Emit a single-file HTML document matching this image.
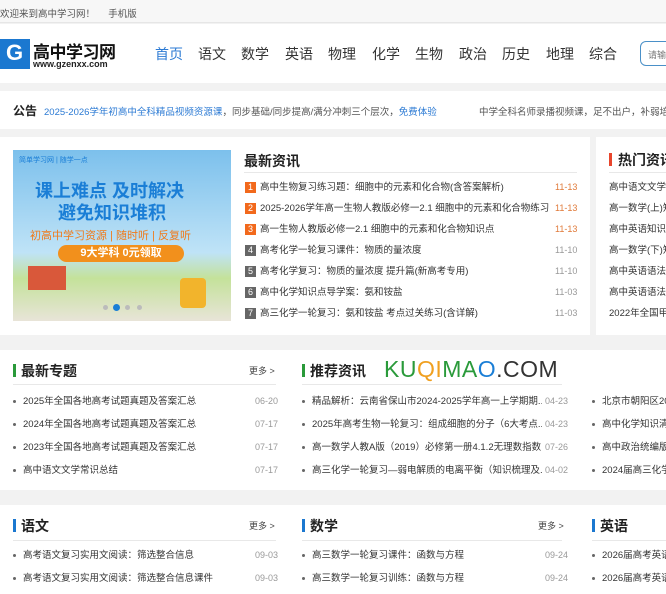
<!DOCTYPE html>
<html><head><meta charset="utf-8"><style>
*{margin:0;padding:0;box-sizing:border-box}
body{width:666px;height:594px;overflow:hidden;background:#f2f2f2;font-family:"Liberation Sans","Noto Sans CJK SC",sans-serif;color:#333;position:relative}
.a{position:absolute;white-space:nowrap}
.w{position:absolute;background:#fff}
.nav{font-size:14px;color:#333;top:44px}
.li{font-size:9.5px;color:#333;line-height:13px;overflow:hidden}
.d{font-size:9px;color:#999;line-height:13px}
.dot{display:inline-block;width:3px;height:3px;background:#666;border-radius:50%;margin-right:7px;vertical-align:middle}
.bd{display:inline-block;width:11px;height:11px;color:#fff;font-size:9px;text-align:center;line-height:11px;margin-right:4px;vertical-align:middle}
.t{font-size:14px;font-weight:bold;color:#222}
.bar{position:absolute;width:3px;height:13px}
.hr{position:absolute;height:1px;background:#e8e8e8}
</style></head><body>
<div class="w" style="left:0;top:0;width:666px;height:23px;background:#f7f7f7;border-bottom:1px solid #e6e6e6"></div>
<div class="a" style="left:0;top:6px;font-size:9.5px;color:#555">欢迎来到高中学习网！&nbsp;&nbsp;&nbsp;&nbsp;&nbsp;手机版</div>
<div class="w" style="left:0;top:24px;width:666px;height:59px"></div>
<div class="w" style="left:0;top:39px;width:30px;height:30px;background:#1b78d0"></div>
<div class="a" style="left:6px;top:40px;font-size:22px;font-weight:bold;color:#fff">G</div>
<div class="a" style="left:33px;top:38px;font-size:17px;font-weight:bold;color:#111;letter-spacing:-0.5px">高中学习网</div>
<div class="a" style="left:33px;top:59px;font-size:9px;font-weight:bold;color:#222">www.gzenxx.com</div>
<div class="a nav" style="left:155px;color:#2d7bd4">首页</div>
<div class="a nav" style="left:198px">语文</div>
<div class="a nav" style="left:241px">数学</div>
<div class="a nav" style="left:285px">英语</div>
<div class="a nav" style="left:328px">物理</div>
<div class="a nav" style="left:372px">化学</div>
<div class="a nav" style="left:415px">生物</div>
<div class="a nav" style="left:459px">政治</div>
<div class="a nav" style="left:502px">历史</div>
<div class="a nav" style="left:546px">地理</div>
<div class="a nav" style="left:589px">综合</div>
<div class="a" style="left:640px;top:41px;width:40px;height:25px;border:1px solid #4a90c8;border-radius:6px;font-size:9px;color:#777;padding:6px 0 0 7px">请输</div>
<div class="w" style="left:0;top:91px;width:666px;height:38px"></div>
<div class="a" style="left:13px;top:102px;font-size:12px;font-weight:bold;color:#222">公告</div>
<div class="a" style="left:44px;top:104px;font-size:9.5px;color:#555"><span style="color:#2d7bd4">2025-2026学年初高中全科精品视频资源课</span>，同步基础/同步提高/满分冲刺三个层次，<span style="color:#2d7bd4">免费体验</span></div>
<div class="a" style="left:479px;top:104px;font-size:9.5px;color:#555">中学全科名师录播视频课，足不出户，补弱培优</div>
<div class="w" style="left:0;top:137px;width:590px;height:198px"></div>
<div class="w" style="left:596px;top:137px;width:70px;height:198px"></div>
<div class="a" style="left:13px;top:150px;width:218px;height:171px;background:linear-gradient(#7cc0ec,#bfe3f7 60%,#c4e29a 75%,#e8e4d8)"></div>
<div class="a" style="left:35px;top:177px;font-size:18px;font-weight:bold;color:#1a7ed6">课上难点 及时解决</div>
<div class="a" style="left:58px;top:199px;font-size:18px;font-weight:bold;color:#1a7ed6">避免知识堆积</div>
<div class="a" style="left:30px;top:227px;font-size:11px;color:#f07a1a">初高中学习资源 | 随时听 | 反复听</div>
<div class="a" style="left:58px;top:245px;width:126px;height:17px;border-radius:9px;background:#f2901c;color:#fff;font-size:11px;font-weight:bold;text-align:center;line-height:17px">9大学科 0元领取</div>
<div class="a" style="left:19px;top:155px;font-size:7px;color:#1a7ed6">简单学习网 | 随学一点</div>
<div class="a" style="left:28px;top:266px;width:38px;height:24px;background:#d9583a"></div>
<div class="a" style="left:103px;top:305px;width:5px;height:5px;border-radius:50%;background:#bbb"></div>
<div class="a" style="left:113px;top:304px;width:7px;height:7px;border-radius:50%;background:#1a7ed6"></div>
<div class="a" style="left:125px;top:305px;width:5px;height:5px;border-radius:50%;background:#bbb"></div>
<div class="a" style="left:137px;top:305px;width:5px;height:5px;border-radius:50%;background:#bbb"></div>
<div class="a" style="left:180px;top:278px;width:26px;height:30px;background:#f2b42c;border-radius:4px"></div>
<div class="a t" style="left:244px;top:151px">最新资讯</div>
<div class="hr" style="left:244px;top:172px;width:333px"></div>
<div class="a li" style="left:245px;top:181px;width:305px"><span class="bd" style="background:#f2691c">1</span>高中生物复习练习题：细胞中的元素和化合物(含答案解析)</div>
<div class="a li" style="left:245px;top:202px;width:305px"><span class="bd" style="background:#f2691c">2</span>2025-2026学年高一生物人教版必修一2.1 细胞中的元素和化合物练习</div>
<div class="a li" style="left:245px;top:223px;width:305px"><span class="bd" style="background:#f2691c">3</span>高一生物人教版必修一2.1 细胞中的元素和化合物知识点</div>
<div class="a li" style="left:245px;top:244px"><span class="bd" style="background:#666">4</span>高考化学一轮复习课件：物质的量浓度</div>
<div class="a li" style="left:245px;top:265px"><span class="bd" style="background:#666">5</span>高考化学复习：物质的量浓度 提升篇(新高考专用)</div>
<div class="a li" style="left:245px;top:286px"><span class="bd" style="background:#666">6</span>高中化学知识点导学案：氨和铵盐</div>
<div class="a li" style="left:245px;top:307px"><span class="bd" style="background:#666">7</span>高三化学一轮复习：氨和铵盐 考点过关练习(含详解)</div>
<div class="a d" style="left:555px;top:181px;color:#e07a3a">11-13</div>
<div class="a d" style="left:555px;top:202px;color:#e07a3a">11-13</div>
<div class="a d" style="left:555px;top:223px;color:#e07a3a">11-13</div>
<div class="a d" style="left:555px;top:244px">11-10</div>
<div class="a d" style="left:555px;top:265px">11-10</div>
<div class="a d" style="left:555px;top:286px">11-03</div>
<div class="a d" style="left:555px;top:307px">11-03</div>
<div class="bar" style="left:609px;top:153px;background:#e8452c"></div>
<div class="a t" style="left:618px;top:150px">热门资讯</div>
<div class="hr" style="left:609px;top:172px;width:60px"></div>
<div class="a li" style="left:609px;top:181px">高中语文文学常识</div>
<div class="a li" style="left:609px;top:202px">高一数学(上)知识</div>
<div class="a li" style="left:609px;top:223px">高中英语知识点</div>
<div class="a li" style="left:609px;top:244px">高一数学(下)知识</div>
<div class="a li" style="left:609px;top:265px">高中英语语法知识</div>
<div class="a li" style="left:609px;top:286px">高中英语语法总结</div>
<div class="a li" style="left:609px;top:307px">2022年全国甲卷</div>
<div class="w" style="left:0;top:350px;width:666px;height:140px"></div>
<div class="bar" style="left:13px;top:364px;background:#2a9a3a"></div>
<div class="a t" style="left:21px;top:361px">最新专题</div>
<div class="a" style="left:249px;top:364px;font-size:9px;color:#444">更多 &gt;</div>
<div class="hr" style="left:13px;top:384px;width:263px"></div>
<div class="a li" style="left:13px;top:395px"><span class="dot"></span>2025年全国各地高考试题真题及答案汇总</div>
<div class="a li" style="left:13px;top:418px"><span class="dot"></span>2024年全国各地高考试题真题及答案汇总</div>
<div class="a li" style="left:13px;top:441px"><span class="dot"></span>2023年全国各地高考试题真题及答案汇总</div>
<div class="a li" style="left:13px;top:464px"><span class="dot"></span>高中语文文学常识总结</div>
<div class="a d" style="left:255px;top:395px">06-20</div>
<div class="a d" style="left:255px;top:418px">07-17</div>
<div class="a d" style="left:255px;top:441px">07-17</div>
<div class="a d" style="left:255px;top:464px">07-17</div>
<div class="bar" style="left:302px;top:364px;background:#2a9a3a"></div>
<div class="a t" style="left:310px;top:361px">推荐资讯</div>
<div class="a" style="left:384px;top:356px;font-size:23px;letter-spacing:0.5px;color:#333;font-weight:300"><span style="color:#2a9a3a">KU</span><span style="color:#f0a020">QI</span><span style="color:#2a9a3a">MA</span><span style="color:#1a7ed6">O</span>.COM</div>
<div class="hr" style="left:302px;top:384px;width:260px"></div>
<div class="a li" style="left:302px;top:395px;width:240px"><span class="dot"></span>精品解析：云南省保山市2024-2025学年高一上学期期...</div>
<div class="a li" style="left:302px;top:418px;width:240px"><span class="dot"></span>2025年高考生物一轮复习：组成细胞的分子（6大考点...</div>
<div class="a li" style="left:302px;top:441px;width:240px"><span class="dot"></span>高一数学人教A版（2019）必修第一册4.1.2无理数指数...</div>
<div class="a li" style="left:302px;top:464px;width:240px"><span class="dot"></span>高三化学一轮复习—弱电解质的电离平衡（知识梳理及...</div>
<div class="a d" style="left:545px;top:395px">04-23</div>
<div class="a d" style="left:545px;top:418px">04-23</div>
<div class="a d" style="left:545px;top:441px">07-26</div>
<div class="a d" style="left:545px;top:464px">04-02</div>
<div class="a li" style="left:592px;top:395px"><span class="dot"></span>北京市朝阳区2024</div>
<div class="a li" style="left:592px;top:418px"><span class="dot"></span>高中化学知识清单</div>
<div class="a li" style="left:592px;top:441px"><span class="dot"></span>高中政治统编版</div>
<div class="a li" style="left:592px;top:464px"><span class="dot"></span>2024届高三化学</div>
<div class="w" style="left:0;top:505px;width:666px;height:89px"></div>
<div class="bar" style="left:13px;top:519px;background:#1b78d0"></div>
<div class="a t" style="left:21px;top:516px">语文</div>
<div class="a" style="left:249px;top:519px;font-size:9px;color:#444">更多 &gt;</div>
<div class="hr" style="left:13px;top:540px;width:263px"></div>
<div class="a li" style="left:13px;top:549px"><span class="dot"></span>高考语文复习实用文阅读：筛选整合信息</div>
<div class="a li" style="left:13px;top:572px"><span class="dot"></span>高考语文复习实用文阅读：筛选整合信息课件</div>
<div class="a d" style="left:255px;top:549px">09-03</div>
<div class="a d" style="left:255px;top:572px">09-03</div>
<div class="bar" style="left:302px;top:519px;background:#1b78d0"></div>
<div class="a t" style="left:310px;top:516px">数学</div>
<div class="a" style="left:538px;top:519px;font-size:9px;color:#444">更多 &gt;</div>
<div class="hr" style="left:302px;top:540px;width:260px"></div>
<div class="a li" style="left:302px;top:549px"><span class="dot"></span>高三数学一轮复习课件：函数与方程</div>
<div class="a li" style="left:302px;top:572px"><span class="dot"></span>高三数学一轮复习训练：函数与方程</div>
<div class="a d" style="left:545px;top:549px">09-24</div>
<div class="a d" style="left:545px;top:572px">09-24</div>
<div class="bar" style="left:592px;top:519px;background:#1b78d0"></div>
<div class="a t" style="left:600px;top:516px">英语</div>
<div class="hr" style="left:592px;top:540px;width:80px"></div>
<div class="a li" style="left:592px;top:549px"><span class="dot"></span>2026届高考英语</div>
<div class="a li" style="left:592px;top:572px"><span class="dot"></span>2026届高考英语</div>
</body></html>
